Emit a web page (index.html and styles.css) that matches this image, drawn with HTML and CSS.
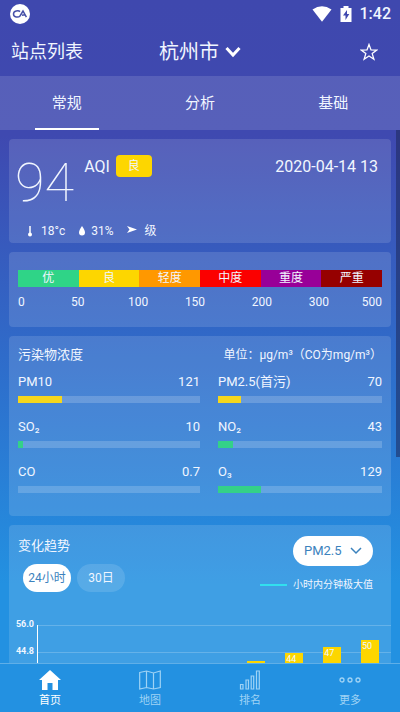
FILE: index.html
```html
<!DOCTYPE html>
<html lang="zh-CN">
<head>
<meta charset="utf-8">
<meta name="viewport" content="width=device-width, initial-scale=1">
<title>杭州市</title>
<link rel="stylesheet" href="styles.css">
</head>
<body>
<div class="status">
  <svg width="20" height="20" viewBox="0 0 20 20"><circle cx="10" cy="10" r="10" fill="#fff"/><path d="M10 7.6C8.600 6.200 3.500 6.500 3.500 10s5 3.800 6.500 2L13 7l3.400 6.200M12 11.200l2.600-.4" fill="none" stroke="#4650a8" stroke-width="1.500"/></svg>
  <span class="status-right">
    <svg width="20" height="16" viewBox="0 0 20 16"><path d="M.5 3.500Q10-3 19.500 3.500L10 15.800Z" fill="#fff"/></svg>
    <svg width="12" height="16" viewBox="0 0 12 16"><path fill="#fff" fill-rule="evenodd" d="M3.500 0h5v2H11.500v14H.5V2h3ZM7 4 3 9.500h2.500V14L9.300 8H7Z"/></svg>
    <time>1:42</time>
  </span>
</div>
<header class="header">
  <a class="stations" href="#">站点列表</a>
  <button class="city" type="button">杭州市<svg width="16" height="12" viewBox="0 0 16 12"><path d="M1.500 2 8 9l6.500-7" fill="none" stroke="#fff" stroke-width="3"/></svg></button>
  <button class="star" type="button" aria-label="收藏"><svg width="18" height="18" viewBox="0 0 18 18"><path d="m9 1.500 2 5.400 5.800.2-4.600 3.500 1.700 5.700L9 13l-4.900 3.300 1.700-5.700L1.200 7.100 7 6.900Z" fill="none" stroke="#fff" stroke-width="1.300"/></svg></button>
</header>
<nav class="tabs">
  <a class="tab on" href="#">常规</a><a class="tab" href="#">分析</a><a class="tab" href="#">基础</a>
</nav>
<main class="content">
  <div class="scrollbar"></div>
  <section class="card now">
    <div class="now-top">
      <span class="aqi">94</span><span class="aqi-name">AQI</span><span class="badge">良</span>
      <time class="date">2020-04-14 13</time>
    </div>
    <div class="weather">
      <span class="w"><svg width="6" height="12" viewBox="0 0 6 12"><path d="M3 1v8" stroke="#fff" stroke-width="1.500"/><circle cx="3" cy="9.500" r="2" fill="#fff"/></svg>18°c</span>
      <span class="w"><svg width="8" height="12" viewBox="0 0 8 12"><path d="M4 1q3 4 3 6.500a3 3 0 0 1-6 0Q1 5 4 1Z" fill="#fff"/></svg>31%</span>
      <span class="w wind"><svg width="10" height="12" viewBox="0 0 10 12"><path d="m0 1 10 3.500L0 8l2.500-3.500Z" fill="#fff"/></svg>级</span>
    </div>
  </section>
  <section class="card scale">
    <div class="levels"><span class="l1">优</span><span class="l2">良</span><span class="l3">轻度</span><span class="l4">中度</span><span class="l5">重度</span><span class="l6">严重</span></div>
    <div class="marks"><span>0</span><span>50</span><span>100</span><span>150</span><span>200</span><span>300</span><span>500</span></div>
  </section>
  <section class="card pollution">
    <div class="head"><h2>污染物浓度</h2><span class="unit">单位：μg/m³（CO为mg/m³）</span></div>
    <div class="items">
      <div class="item"><span>PM10</span><b>121</b><div class="bar"><i class="yellow" style="width:24%"></i></div></div>
      <div class="item"><span>PM2.5(首污)</span><b>70</b><div class="bar"><i class="yellow" style="width:14%"></i></div></div>
      <div class="item"><span>SO₂</span><b>10</b><div class="bar"><i class="green" style="width:3%"></i></div></div>
      <div class="item"><span>NO₂</span><b>43</b><div class="bar"><i class="green" style="width:9%"></i></div></div>
      <div class="item"><span>CO</span><b>0.7</b><div class="bar"></div></div>
      <div class="item"><span>O₃</span><b>129</b><div class="bar"><i class="green" style="width:26%"></i></div></div>
    </div>
  </section>
  <section class="card trend">
    <div class="trend-head">
      <div>
        <h2>变化趋势</h2>
        <div class="ranges"><button class="range on" type="button">24小时</button><button class="range" type="button">30日</button></div>
      </div>
      <div class="trend-right">
        <select class="pick" aria-label="污染物"><option>PM2.5</option></select>
        <div class="legend"><i></i>小时内分钟极大值</div>
      </div>
    </div>
    <div class="chart">
      <div class="axis"><span>56.0</span><span>44.8</span></div>
      <div class="plot">
        <span class="col first" style="height:73%"></span>
        <span class="col" style="height:79%">44</span>
        <span class="col" style="height:84%">47</span>
        <span class="col" style="height:89%">50</span>
      </div>
    </div>
  </section>
</main>
<nav class="bottom">
  <a class="on" href="#"><svg width="22" height="20" viewBox="0 0 22 20"><path d="M11 0 22 10h-3v10h-5.500v-7h-5v7H3V10H0Z" fill="#fff"/></svg>首页</a>
  <a href="#"><svg width="22" height="20" viewBox="0 0 22 20"><path d="M.7 2.500 7.500 1l7 2 6.800-2v16.500l-6.800 1.500-7-1.500-6.800 1.500ZM7.500 1v16.500M14.500 3v16" fill="none" stroke="currentColor" stroke-width="1.200"/></svg>地图</a>
  <a href="#"><svg width="22" height="20" viewBox="0 0 22 20"><path d="M1.500 14.500h2.500v4.500H1.500ZM7 10h2.500v9H7ZM12.200 6h2.500v13h-2.500ZM17.500 1h2.800v18h-2.800Z" fill="none" stroke="currentColor" stroke-width="1.200"/></svg>排名</a>
  <a href="#"><svg width="22" height="20" viewBox="0 0 22 20"><g fill="none" stroke="currentColor" stroke-width="1.300"><circle cx="3" cy="10" r="2"/><circle cx="11" cy="10" r="2"/><circle cx="19" cy="10" r="2"/></g></svg>更多</a>
</nav>
</body>
</html>
```
FILE: styles.css
```css
* { box-sizing: border-box; }
body {
  margin: 0;
  height: 100vh;
  display: flex;
  flex-direction: column;
  overflow: hidden;
  color: #f1f6ff;
  font: 13px/20px Roboto, "Noto Sans CJK SC", sans-serif;
  background: linear-gradient(#3f48ae 0, #3f49b0 19%, #2d70cd 54%, #2391e1 82%, #2391e1);
}
a { color: inherit; text-decoration: none; }
button, select { font: inherit; color: inherit; border: 0; padding: 0; background: none; }
svg { display: block; flex: none; }
h2 { margin: 0; font-size: 13px; line-height: 20px; font-weight: 400; }

.status {
  flex: none;
  height: 28px;
  display: flex;
  align-items: center;
  justify-content: space-between;
  padding: 0 9px 0 10px;
}
.status-right { display: flex; align-items: center; gap: 8px; font-size: 16px; font-weight: 500; }

.header {
  flex: none;
  height: 48px;
  display: grid;
  grid-template-columns: 1fr auto 1fr;
  align-items: center;
  padding: 0 11px;
}
.stations { font-size: 18px; }
.city { display: flex; align-items: center; gap: 6px; font-size: 20px; }
.star { justify-self: end; margin-right: 11px; }

.tabs { flex: none; height: 54px; display: flex; background: rgba(255, 255, 255, .13); }
.tab { flex: 1; display: flex; align-items: center; justify-content: center; position: relative; font-size: 15px; }
.tab.on::after {
  content: "";
  position: absolute;
  left: 26%;
  right: 26%;
  bottom: 0;
  height: 2px;
  background: #fff;
}

.content {
  flex: 1;
  min-height: 0;
  overflow: hidden;
  position: relative;
  display: flex;
  flex-direction: column;
  gap: 9px;
  padding: 9px 9px 0;
}
.scrollbar {
  position: absolute;
  top: 0;
  right: 0;
  width: 4px;
  height: 327px;
  background: rgba(30, 40, 90, .55);
}
.card { flex: none; border-radius: 4px; background: rgba(255, 255, 255, .13); }

.now { padding: 16px 13px 2px 6px; }
.now-top { display: flex; align-items: flex-start; height: 66px; }
.aqi { font-size: 54px; line-height: 56px; font-weight: 100; }
.aqi-name { font-size: 16px; line-height: 24px; margin-left: 10px; }
.badge {
  width: 36px;
  height: 22px;
  margin-left: 6px;
  border-radius: 4px;
  background: #fdd600;
  font-size: 12px;
  line-height: 22px;
  text-align: center;
}
.date { margin-left: auto; font-size: 16px; line-height: 24px; }
.weather { display: flex; gap: 13px; padding-left: 12px; font-size: 12px; }
.w { display: flex; align-items: center; gap: 8px; }
.w:nth-child(2) { gap: 5px; }

.scale { height: 75px; padding: 18px 9px 0; }
.levels { display: flex; font-size: 12px; line-height: 17px; text-align: center; }
.levels span { flex: 1; }
.l1 { background: #2fd487; }
.l2 { background: #fdd600; }
.l3 { background: #ff9800; }
.l4 { background: #fb0000; }
.l5 { background: #980098; }
.l6 { background: #960000; }
.marks { display: grid; grid-template-columns: 53fr 57fr 57fr 67fr 57fr 53fr auto; margin-top: 5px; font-size: 12px; }

.pollution { height: 180px; padding-top: 9px; }
.head { display: flex; justify-content: space-between; padding: 0 9px; }
.unit { font-size: 12px; }
.items { display: grid; grid-template-columns: 1fr 1fr; row-gap: 11px; margin-top: 7px; }
.item { display: grid; grid-template-columns: 1fr auto; row-gap: 4px; padding-left: 9px; }
.item:nth-child(even) { padding: 0 9px 0 18px; }
.item b { font-weight: 400; }
.bar { grid-column: 1 / -1; height: 7px; margin-bottom: 3px; background: rgba(255, 255, 255, .18); }
.bar i { display: block; height: 100%; }
.yellow { background: #f5d61c; }
.green { background: #34d188; }

.trend { padding-top: 11px; }
.trend-head { display: flex; justify-content: space-between; height: 89px; padding: 0 18px 0 9px; }
.ranges { display: flex; gap: 6px; margin: 8px 0 0 5px; }
.range {
  height: 28px;
  width: 48px;
  border-radius: 14px;
  font-size: 12px;
  background: rgba(255, 255, 255, .13);
}
.range.on { background: #fff; color: #3b82bd; }
.trend-right { display: flex; flex-direction: column; align-items: flex-end; gap: 9px; }
.pick {
  appearance: none;
  width: 80px;
  height: 30px;
  padding: 0 11px;
  border-radius: 15px;
  color: #3b82bd;
  background: #fff url("data:image/svg+xml,%3Csvg xmlns='http://www.w3.org/2000/svg' width='12' height='8'%3E%3Cpath d='m1 1 5 5 5-5' fill='none' stroke='%233b82bd' stroke-width='1.500'/%3E%3C/svg%3E") no-repeat right 11px center;
}
.legend { display: flex; align-items: center; gap: 6px; font-size: 10px; }
.legend i { width: 27px; height: 2px; background: #32dfee; }

.chart { display: flex; }
.axis { width: 28px; padding-right: 3px; font-size: 9px; line-height: 12px; font-weight: 700; text-align: right; margin-top: -7px; }
.axis span { display: block; height: 27px; }
.plot {
  flex: 1;
  height: 135px;
  display: grid;
  grid-template-columns: repeat(9, 1fr);
  align-items: end;
  padding: 0 2px 0 10px;
  border-left: 1px solid #fff;
  background: repeating-linear-gradient(rgba(255, 255, 255, .2) 0 1px, transparent 1px 27px);
}
.col { width: 18px; justify-self: center; padding-left: 1px; font-size: 9px; line-height: 12px; background: #fdd600; }
.first { grid-column: 6; }

.bottom { flex: none; height: 49px; display: flex; position: relative; border-top: 1px solid #5fafe8; background: #2391e1; }
.bottom a {
  flex: 1;
  display: flex;
  flex-direction: column;
  align-items: center;
  padding-top: 6px;
  gap: 3px;
  font-size: 11px;
  line-height: 16px;
  color: #9fd3f5;
}
.bottom .on { color: #fff; }
```
